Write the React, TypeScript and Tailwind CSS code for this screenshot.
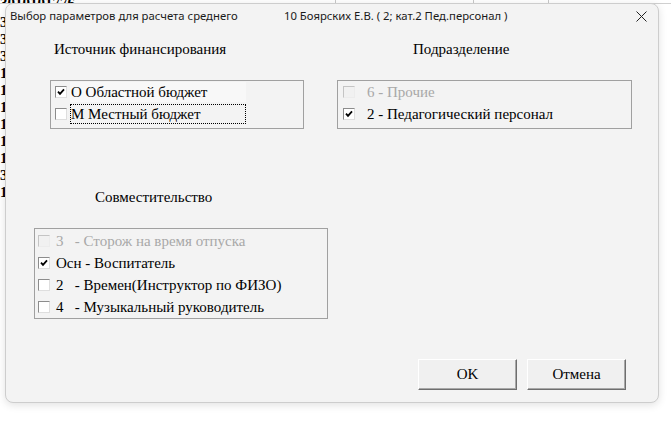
import React from "react";

type Item = { label: string; checked?: boolean; disabled?: boolean; focused?: boolean; light?: boolean };

function Check({ checked, disabled }: { checked?: boolean; disabled?: boolean }) {
  return (
    <span
      className={`flex h-[12px] w-[12px] shrink-0 items-center justify-center border ${
        disabled
          ? "border-t-[#c4c4c4] border-l-[#c4c4c4] border-b-[#ececec] border-r-[#ececec] bg-[#f1f1f1]"
          : "border-t-[#8c8c8c] border-l-[#8c8c8c] border-b-[#dedede] border-r-[#dedede] bg-white"
      }`}
    >
      {checked && (
        <svg width="8" height="8" viewBox="0 0 8 8">
          <path d="M1 3.6 L3 5.8 L7 1.4" fill="none" stroke="#000" strokeWidth="1.8" />
        </svg>
      )}
    </span>
  );
}

function Row({ item, gap, labelW }: { item: Item; gap: string; labelW?: string }) {
  return (
    <div className={`flex h-[22px] items-center ${gap}`}>
      <Check checked={item.checked} disabled={item.disabled} />
      <span
        className={`flex h-[20px] items-center whitespace-pre text-[15px] leading-none ${labelW ?? ""} ${
          item.disabled ? "text-[#a8a8a8]" : "text-black"
        } ${item.focused ? "border border-dotted border-black" : "border border-transparent"} ${
          item.light ? "bg-[#f8f8f8]" : ""
        }`}
      >
        {item.label}
      </span>
    </div>
  );
}

function Sheet() {
  const rows = ["3", "3", "3", "1", "1", "1", "1", "1", "1", "3", "1"];
  return (
    <div className="absolute inset-0 [font-family:'Liberation_Serif',serif]">
      <div className="flex h-[4px] overflow-hidden border-b border-[#d0d0d0]">
        <span className="w-[100px] text-[15px] font-bold leading-[6px]">3010101776</span>
        <span className="ml-[235px] h-full w-[138px] border-l border-[#c8c8c8]" />
        <span className="h-full w-[75px] border-l border-[#c8c8c8]" />
        <span className="h-full border-l border-[#c8c8c8]" />
      </div>
      <div className="flex flex-col pt-[10px]">
        {rows.map((r, i) => (
          <div key={i} className="h-[17px] text-[15px] font-bold leading-[17px]">
            {r}
          </div>
        ))}
      </div>
    </div>
  );
}

export default function App() {
  const source: Item[] = [
    { label: "О Областной бюджет", checked: true, light: true },
    { label: "М Местный бюджет", focused: true },
  ];
  const dept: Item[] = [
    { label: "6 - Прочие", disabled: true },
    { label: "2 - Педагогический персонал", checked: true },
  ];
  const combo: Item[] = [
    { label: "3   - Сторож на время отпуска", disabled: true },
    { label: "Осн - Воспитатель", checked: true },
    { label: "2   - Времен(Инструктор по ФИЗО)" },
    { label: "4   - Музыкальный руководитель" },
  ];

  return (
    <div className="relative h-[422px] w-[671px] overflow-hidden bg-white">
      <Sheet />
      <div className="absolute left-[5px] top-[3px] flex h-[400px] w-[654px] flex-col rounded-lg border border-[#cdcdcd] bg-[#f3f3f3] shadow-[0_2px_8px_rgba(0,0,0,0.12)]">
        {/* title bar */}
        <div className="flex h-[25px] items-center pl-[4px] [font-family:'Noto_Sans',sans-serif] text-[11.3px] text-[#1a1a1a]">
          <span className="w-[274px] whitespace-nowrap">Выбор параметров для расчета среднего</span>
          <span className="whitespace-nowrap">10 Боярских Е.В. ( 2; кат.2 Пед.персонал )</span>
          <svg className="ml-auto mr-[11px]" width="11" height="11" viewBox="0 0 11 11">
            <path d="M0.5 0.5 L10.5 10.5 M10.5 0.5 L0.5 10.5" stroke="#222" strokeWidth="1" />
          </svg>
        </div>

        <div className="flex flex-col [font-family:'Liberation_Serif',serif]">
          <div className="mt-[12px] flex">
            <div className="ml-[44px] flex w-[254px] flex-col">
              <div className="pl-[4px] text-[15px] leading-[17px]">Источник финансирования</div>
              <div className="mt-[22px] flex h-[49px] flex-col border border-[#a0a0a0] pl-[4px]">
                {source.map((it, i) => (
                  <Row key={i} item={it} gap="gap-[3px]" labelW="w-[176px]" />
                ))}
              </div>
            </div>
            <div className="ml-[33px] flex w-[295px] flex-col">
              <div className="pl-[76px] text-[15px] leading-[17px]">Подразделение</div>
              <div className="mt-[22px] flex h-[49px] flex-col border border-[#a0a0a0] pl-[5px]">
                {dept.map((it, i) => (
                  <Row key={i} item={it} gap="gap-[11px]" />
                ))}
              </div>
            </div>
          </div>

          <div className="ml-[28px] mt-[60px] flex w-[294px] flex-col">
            <div className="pl-[61px] text-[15px] leading-[17px]">Совместительство</div>
            <div className="mt-[22px] flex h-[91px] flex-col border border-[#a0a0a0] pl-[3px] pt-[1px]">
              {combo.map((it, i) => (
                <Row key={i} item={it} gap="gap-[5px]" />
              ))}
            </div>
          </div>
        </div>

        <div className="mt-auto mb-[12px] mr-[32px] flex justify-end gap-[10px] [font-family:'Liberation_Serif',serif]">
          {["OK", "Отмена"].map((t) => (
            <button
              key={t}
              className="flex h-[31px] w-[99px] items-center justify-center border border-t-white border-l-white border-b-[#6e6e6e] border-r-[#6e6e6e] bg-[#f0f0f0] text-[15px] text-black shadow-[inset_-1px_-1px_0_#a8a8a8]"
            >
              {t}
            </button>
          ))}
        </div>
      </div>
    </div>
  );
}
